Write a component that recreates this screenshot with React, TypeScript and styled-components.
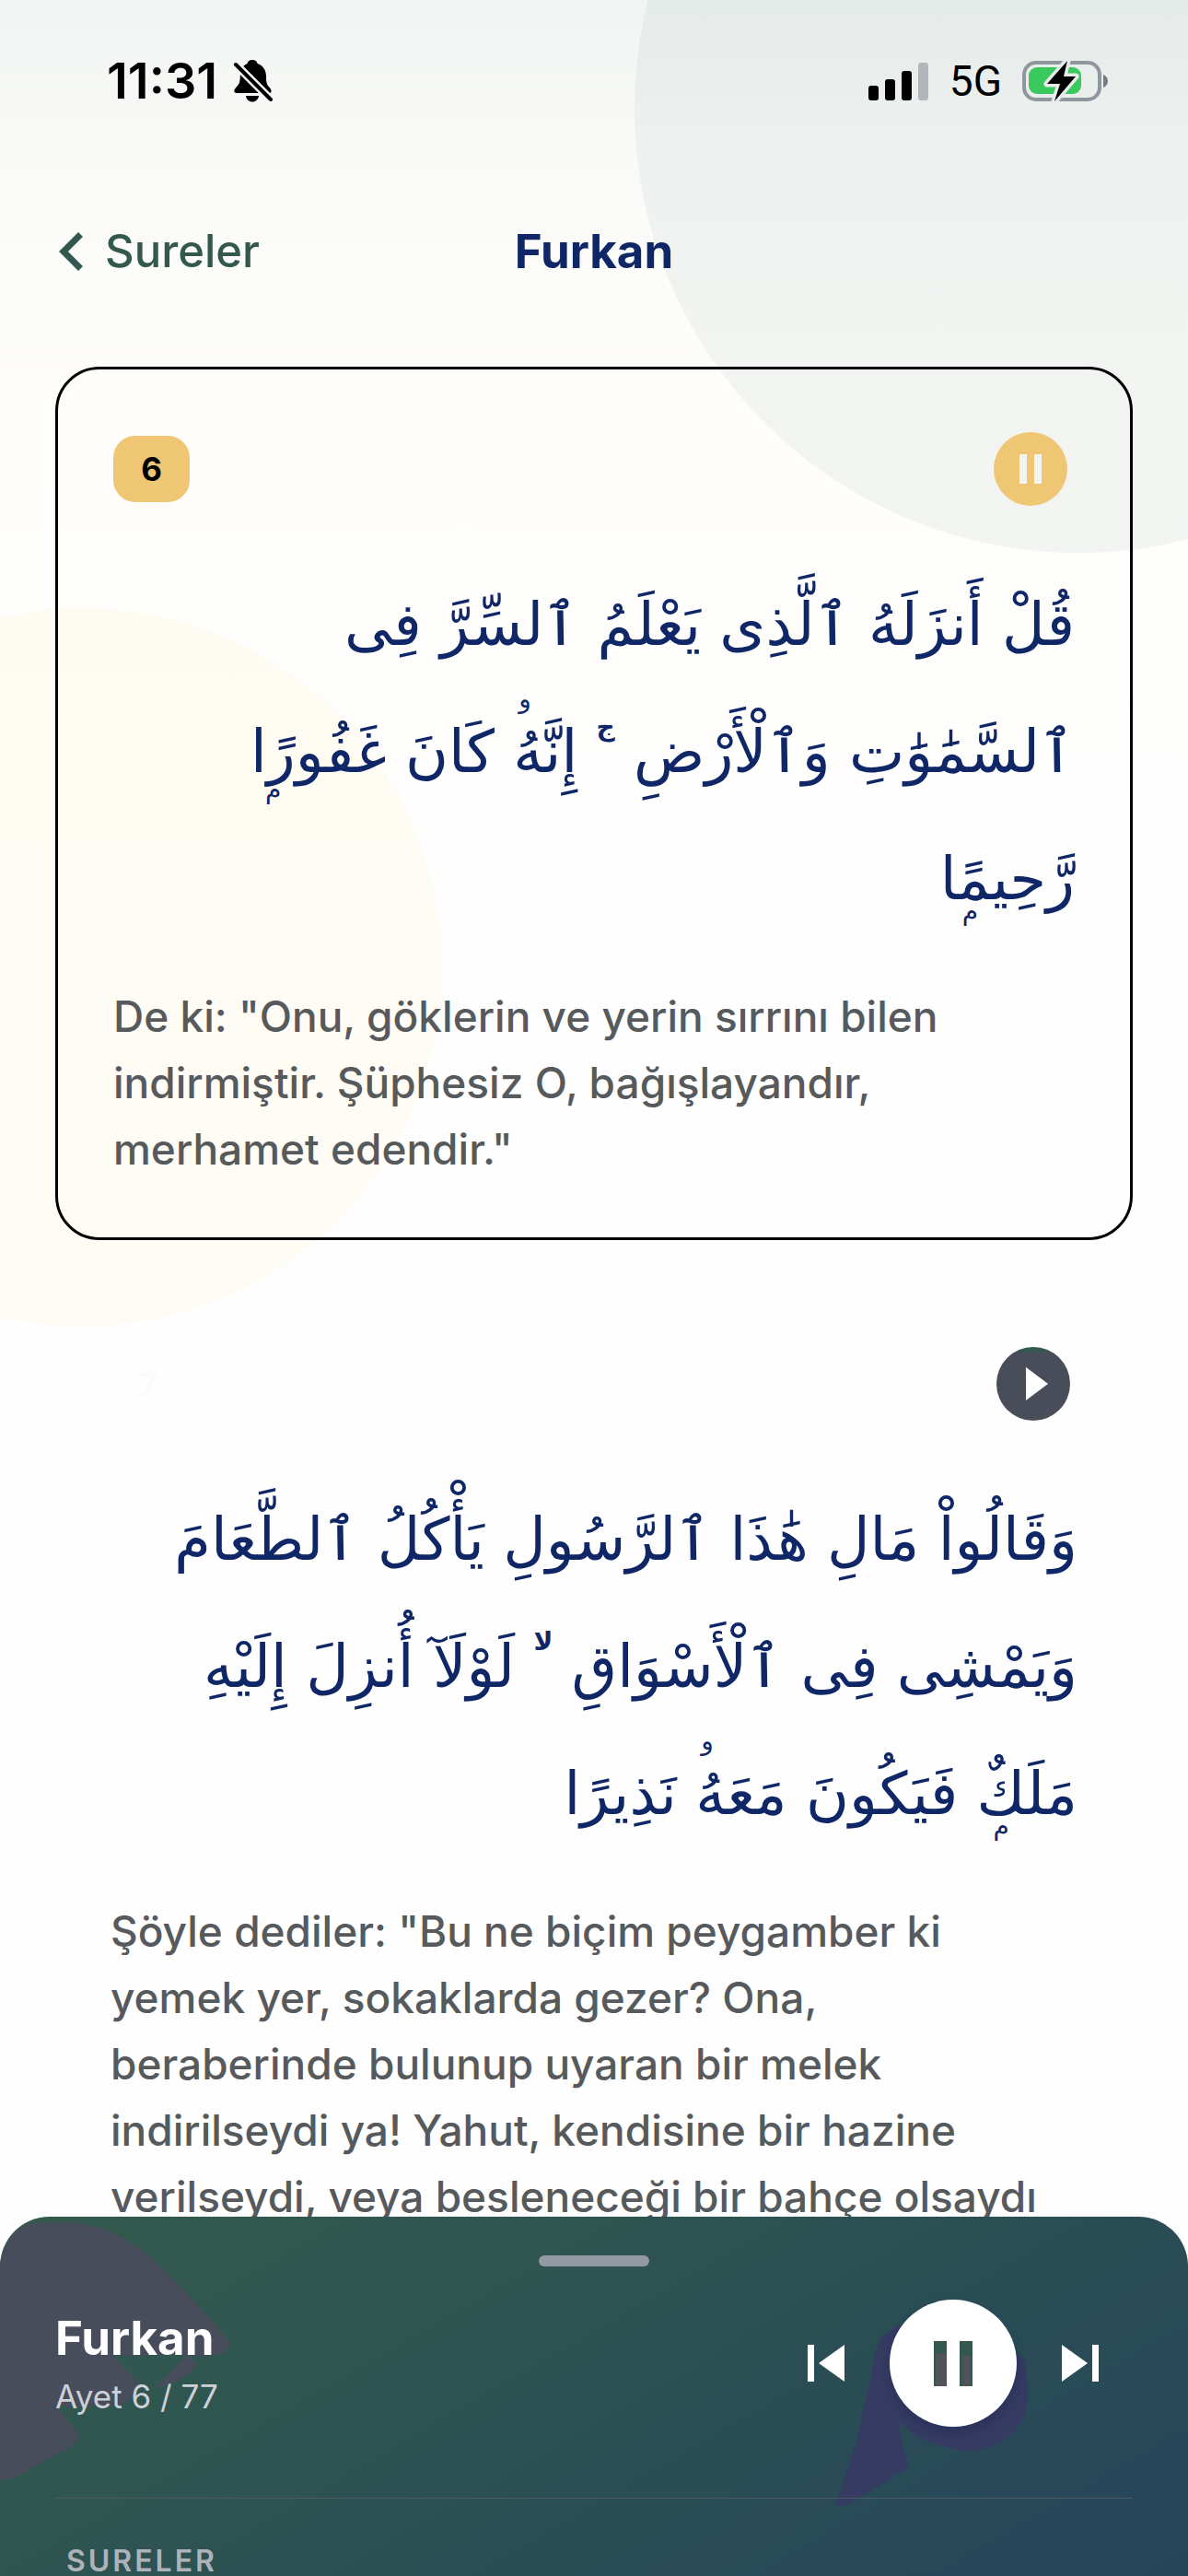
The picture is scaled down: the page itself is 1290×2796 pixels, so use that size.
import React from "react";
import styled, { createGlobalStyle } from "styled-components";

const color = {
  navy: "#0f2667",
  green: "#33584f",
  gold: "#eec674",
  body: "#575a5d",
  slate: "#494d5a",
};

const GlobalStyle = createGlobalStyle`
  *, *::before, *::after { box-sizing: border-box; }
  body {
    margin: 0;
    font-family: Inter, "Liberation Sans", sans-serif;
    background: #fefefe;
  }
  button { border: 0; padding: 0; background: none; font: inherit; color: inherit; cursor: pointer; }
  h1, h2, p { margin: 0; }
`;

const Screen = styled.div`
  position: relative;
  display: flex;
  flex-direction: column;
  height: 100vh;
  overflow: hidden;
  background: linear-gradient(180deg, #f1f4f2 0px, #f9faf8 160px, #fefdfa 400px, #fefefe 1000px);
`;

const Bubble = styled.div<{ $size: number; $tint: string }>`
  position: absolute;
  width: ${(p) => p.$size}px;
  height: ${(p) => p.$size}px;
  border-radius: 50%;
  background: ${(p) => p.$tint};
`;

const TopBubble = styled(Bubble)`
  top: -364px;
  right: -363px;
`;

const SideBubble = styled(Bubble)`
  top: 660px;
  left: -300px;
`;

const StatusBar = styled.div`
  position: relative;
  display: flex;
  align-items: center;
  justify-content: space-between;
  flex: none;
  height: 176px;
  padding: 0 86px 0 116px;
  color: #000;
`;

const StatusGroup = styled.div<{ $gap: number }>`
  display: flex;
  align-items: center;
  gap: ${(p) => p.$gap}px;
`;

const Clock = styled.time`
  font-size: 54px;
  line-height: 64px;
  font-weight: 600;
`;

const Network = styled.span`
  font-family: Roboto, sans-serif;
  font-size: 46px;
  line-height: 56px;
`;

const Header = styled.header`
  position: relative;
  display: grid;
  grid-template-columns: 1fr auto 1fr;
  align-items: center;
  flex: none;
  height: 192px;
  padding: 2px 64px 0;
`;

const BackButton = styled.button`
  display: flex;
  align-items: center;
  justify-self: start;
  gap: 24px;
  color: ${color.green};
  font-size: 49px;
  line-height: 60px;
  font-weight: 500;
`;

const Title = styled.h1`
  color: ${color.navy};
  font-size: 51px;
  line-height: 60px;
  font-weight: 700;
`;

const VerseList = styled.main`
  position: relative;
  display: flex;
  flex-direction: column;
  gap: 48px;
  flex: 1;
  min-height: 0;
  overflow: hidden;
  padding: 30px 60px 0;
`;

const VerseCard = styled.article<{ $active?: boolean }>`
  flex: none;
  padding: 60px;
  border: ${(p) => (p.$active ? "3px solid #000" : "0")};
  border-radius: 48px;
`;

const VerseHead = styled.div`
  display: flex;
  align-items: center;
  justify-content: space-between;
  height: 96px;
  padding-right: 8px;
`;

const Badge = styled.span<{ $active?: boolean }>`
  display: grid;
  place-items: center;
  width: 83px;
  height: 72px;
  border-radius: 24px;
  background: ${(p) => (p.$active ? color.gold : "transparent")};
  color: ${(p) => (p.$active ? "#000" : "#fbfbfb")};
  font-size: 35px;
  line-height: 44px;
  font-weight: 700;
`;

const RoundButton = styled.button<{ $active?: boolean }>`
  display: grid;
  place-items: center;
  width: 80px;
  height: 80px;
  border-radius: 50%;
  background: ${(p) =>
    p.$active ? color.gold : `linear-gradient(180deg, ${color.green} 5px, ${color.slate} 6px)`};
  color: ${(p) => (p.$active ? "#f2f4f2" : "#fff")};
`;

const Arabic = styled.p`
  margin-top: 52px;
  color: ${color.navy};
  font-family: "DejaVu Sans", "DejaVu Sans Mono", sans-serif;
  font-size: 64px;
  line-height: 138px;
`;

const ArabicLine = styled.span`
  display: block;
  white-space: nowrap;
`;

const Word = styled.span`
  position: relative;
`;

const SmallLetter = styled.span<{ $left: number; $top: number }>`
  position: absolute;
  left: ${(p) => p.$left}px;
  top: ${(p) => p.$top}px;
  font-size: 28px;
  line-height: 36px;
`;

const PauseSign = styled.span`
  font-size: 28px;
  line-height: 0;
  font-weight: 700;
  vertical-align: 40px;
`;

const Translation = styled.p`
  margin-top: 44px;
  color: ${color.body};
  font-size: 46px;
  line-height: 72px;
  font-weight: 500;
`;

const TextLine = styled.span`
  display: block;
`;

const Player = styled.section`
  position: relative;
  flex: none;
  overflow: hidden;
  padding: 42px 60px 0;
  border-radius: 54px 54px 0 0;
  background: linear-gradient(150deg, #33594d 0%, #2f5551 34%, #2b4f53 55%, #28475a 88%, #264559 100%);
`;

const Decor = styled.svg<{ $side: "left" | "right" }>`
  position: absolute;
  top: 0;
  ${(p) => p.$side}: 0;
`;

const Handle = styled.div`
  position: relative;
  width: 120px;
  height: 12px;
  margin: 0 auto 36px;
  border-radius: 6px;
  background: #9299a2;
`;

const PlayerRow = styled.div`
  position: relative;
  display: flex;
  align-items: center;
  justify-content: space-between;
  padding: 0 18px 77px 0;
`;

const NowPlaying = styled.div`
  padding-top: 6px;
`;

const TrackName = styled.h2`
  color: #fff;
  font-size: 51px;
  line-height: 66px;
  font-weight: 700;
`;

const TrackMeta = styled.p`
  color: #cdd1d6;
  font-size: 35px;
  line-height: 60px;
`;

const Controls = styled.div`
  display: flex;
  align-items: center;
  gap: 30px;
`;

const SkipButton = styled.button`
  display: grid;
  place-items: center;
  width: 78px;
  height: 78px;
  color: #fff;
`;

const MainButton = styled.button`
  display: grid;
  place-items: center;
  width: 138px;
  height: 138px;
  border-radius: 50%;
  background: #fff;
  box-shadow: 0 6px 12px rgba(20, 30, 80, 0.3);
`;

const Drawer = styled.div`
  position: relative;
  padding: 52px 12px 0;
  border-top: 1px solid #4b5a62;
`;

const DrawerTitle = styled.h2`
  color: #aeb3bb;
  font-size: 32px;
  line-height: 32px;
  font-weight: 600;
  letter-spacing: 3px;
`;

const SilentBell = () => (
  <svg width="44" height="48" viewBox="0 0 44 48" aria-label="Sessiz">
    <path d="M21 1c3 0 5 1.600 5.600 4 6 2 9.400 7 9.400 14 0 8 1 9 4.500 13 1.500 2 1.500 5-.5 5H4c-3 0-3.500-3-1.500-5C7 27 7.500 26 7.800 19 8 12 10.500 7 15.500 5 16 2.600 18 1 21 1z" fill="#000" />
    <path d="M14 40h14c-.5 4-3.500 6.500-7 6.500S14.500 44 14 40z" fill="#000" />
    <path d="M2 5l40 40" stroke="#f6f7f5" strokeWidth="9" />
    <path d="M3 6l38 38" stroke="#000" strokeWidth="4" strokeLinecap="round" />
  </svg>
);

const Signal = () => (
  <svg width="66" height="42" viewBox="0 0 66 42" aria-label="Sinyal">
    <rect x="0" y="26" width="11" height="16" rx="3" />
    <rect x="18" y="19" width="11" height="23" rx="3" />
    <rect x="36" y="10" width="11" height="32" rx="3" />
    <rect x="54" y="1" width="11" height="41" rx="3" fill="#b2b6bb" />
  </svg>
);

const Battery = () => (
  <svg width="94" height="46" viewBox="0 0 94 46" aria-label="Pil">
    <rect x="2" y="3" width="82" height="40" rx="13" fill="none" stroke="#8f969e" strokeWidth="4" />
    <rect x="7" y="8" width="57" height="29" rx="9" fill="#3ac95d" />
    <path d="M88 16c3 1 5 4 5 7s-2 6-5 7z" fill="#747c86" />
    <path d="M49 1L27 26h14l-6 19 23-27H45z" fill="#000" stroke="#e8ebea" strokeWidth="7" paintOrder="stroke" strokeLinejoin="round" />
  </svg>
);

const Chevron = () => (
  <svg width="26" height="42" viewBox="8 6 7.41 12" aria-hidden="true">
    <path d="M15.410 7.410L14 6l-6 6 6 6 1.410-1.410L10.830 12z" fill="currentColor" />
  </svg>
);

const SmallPause = () => (
  <svg width="24" height="32" viewBox="0 0 24 32" aria-hidden="true">
    <path d="M0 0h8v32H0zM16 0h8v32h-8z" fill="currentColor" />
  </svg>
);

const SmallPlay = () => (
  <svg width="32" height="36" viewBox="0 0 32 36" aria-hidden="true">
    <path d="M8 0l24 18L8 36z" fill="currentColor" />
  </svg>
);

const SkipIcon = ({ back }: { back?: boolean }) => (
  <svg width="40" height="40" viewBox="0 0 40 40" aria-hidden="true">
    <path d={back ? "M0 0h7v40H0zM12 20L40 0v40z" : "M33 0h7v40h-7zM28 20L0 0v40z"} fill="currentColor" />
  </svg>
);

const LargePause = () => (
  <svg width="42" height="49" viewBox="0 0 42 49" aria-hidden="true">
    <path d="M0 0h14v49H0zM28 0h14v49H28z" fill={color.green} />
    <path d="M2 13h11v36H2zM31 16h9v33h-9z" fill="#50535c" />
  </svg>
);

type VerseProps = {
  number: number;
  active?: boolean;
  arabic: React.ReactNode[];
  lines: string[];
};

const Verse = ({ number, active, arabic, lines }: VerseProps) => (
  <VerseCard $active={active}>
    <VerseHead>
      <Badge $active={active}>{number}</Badge>
      <RoundButton $active={active} aria-label={active ? "Duraklat" : "Oynat"}>
        {active ? <SmallPause /> : <SmallPlay />}
      </RoundButton>
    </VerseHead>
    <Arabic lang="ar" dir="rtl">
      {arabic.map((line, i) => (
        <ArabicLine key={i}>{line}</ArabicLine>
      ))}
    </Arabic>
    <Translation lang="tr">
      {lines.map((line) => (
        <TextLine key={line}>{line}</TextLine>
      ))}
    </Translation>
  </VerseCard>
);

const verses: VerseProps[] = [
  {
    number: 6,
    active: true,
    arabic: [
      "قُلْ أَنزَلَهُ ٱلَّذِى يَعْلَمُ ٱلسِّرَّ فِى",
      <>
        ٱلسَّمَٰوَٰتِ وَٱلْأَرْضِ <PauseSign>ج</PauseSign>{" "}
        <Word>
          إِنَّهُ<SmallLetter $left={6} $top={-38}>و</SmallLetter>
        </Word>{" "}
        كَانَ{" "}
        <Word>
          غَفُورًا<SmallLetter $left={16} $top={60}>م</SmallLetter>
        </Word>
      </>,
      <Word>
        رَّحِيمًا<SmallLetter $left={24} $top={54}>م</SmallLetter>
      </Word>,
    ],
    lines: [
      'De ki: "Onu, göklerin ve yerin sırrını bilen',
      "indirmiştir. Şüphesiz O, bağışlayandır,",
      'merhamet edendir."',
    ],
  },
  {
    number: 7,
    arabic: [
      "وَقَالُواْ مَالِ هَٰذَا ٱلرَّسُولِ يَأْكُلُ ٱلطَّعَامَ",
      <>
        وَيَمْشِى فِى ٱلْأَسْوَاقِ <PauseSign>لا</PauseSign> لَوْلَآ أُنزِلَ إِلَيْهِ
      </>,
      <>
        <Word>
          مَلَكٌ<SmallLetter $left={18} $top={54}>م</SmallLetter>
        </Word>{" "}
        فَيَكُونَ{" "}
        <Word>
          مَعَهُ<SmallLetter $left={6} $top={-38}>و</SmallLetter>
        </Word>{" "}
        نَذِيرًا
      </>,
    ],
    lines: [
      'Şöyle dediler: "Bu ne biçim peygamber ki',
      "yemek yer, sokaklarda gezer? Ona,",
      "beraberinde bulunup uyaran bir melek",
      "indirilseydi ya! Yahut, kendisine bir hazine",
      "verilseydi, veya besleneceği bir bahçe olsaydı",
    ],
  },
];

export default function App() {
  return (
    <Screen>
      <GlobalStyle />
      <TopBubble $size={964} $tint="rgba(40, 90, 88, 0.055)" />
      <SideBubble $size={780} $tint="rgba(255, 215, 90, 0.06)" />
      <StatusBar>
        <StatusGroup $gap={17}>
          <Clock>11:31</Clock>
          <SilentBell />
        </StatusGroup>
        <StatusGroup $gap={22}>
          <Signal />
          <Network>5G</Network>
          <Battery />
        </StatusGroup>
      </StatusBar>
      <Header>
        <BackButton>
          <Chevron />
          Sureler
        </BackButton>
        <Title>Furkan</Title>
      </Header>
      <VerseList>
        {verses.map((verse) => (
          <Verse key={verse.number} {...verse} />
        ))}
      </VerseList>
      <Player aria-label="Oynatıcı">
        <Decor $side="left" width="260" height="290" viewBox="0 0 260 290" aria-hidden="true">
          <path
            d="M0 50C6 28 16 10 36 7Q65 5 85 7Q105 10 125 19Q147 30 165 45L200 80 235 118 251 138Q246 148 236 150L205 152 214 160Q206 172 190 180L168 186 203 150 122 151 152 182Q146 196 133 205L62 206 87 238Q78 252 60 258L15 284 0 286z"
            fill="#484d5b"
          />
        </Decor>
        <Decor $side="right" width="390" height="320" viewBox="0 0 390 320" aria-hidden="true">
          <path
            d="M80 117Q60 125 55 134 47 155 45 177L30 244 7 314H18L51 294 86 272 77 234 78 222Q92 240 113 246L148 255Q176 254 192 241 210 226 213 214 217 198 216 184L213 157 204 147z"
            fill="#353b61"
          />
        </Decor>
        <Handle />
        <PlayerRow>
          <NowPlaying>
            <TrackName>Furkan</TrackName>
            <TrackMeta>Ayet 6 / 77</TrackMeta>
          </NowPlaying>
          <Controls>
            <SkipButton aria-label="Önceki">
              <SkipIcon back />
            </SkipButton>
            <MainButton aria-label="Duraklat">
              <LargePause />
            </MainButton>
            <SkipButton aria-label="Sonraki">
              <SkipIcon />
            </SkipButton>
          </Controls>
        </PlayerRow>
        <Drawer>
          <DrawerTitle>SURELER</DrawerTitle>
        </Drawer>
      </Player>
    </Screen>
  );
}
